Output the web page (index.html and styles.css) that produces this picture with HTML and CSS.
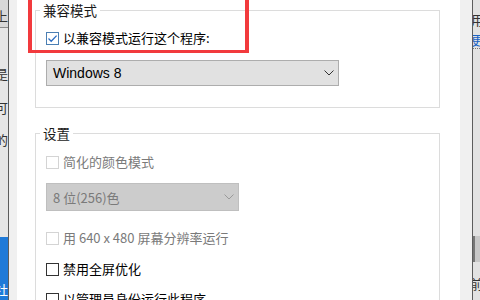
FILE: index.html
```html
<!DOCTYPE html>
<html>
<head>
    <title>兼容性</title>
    <link rel="stylesheet" href="styles.css">
</head>
<body>
    <div class="screen">
        <div class="behind behind-left">
            <div class="toolbar"><span class="frag">上</span></div>
            <span class="frag frag-a">是</span>
            <span class="frag frag-b">可</span>
            <span class="frag frag-c">的</span>
            <div class="spacer"></div>
            <div class="selected"><span class="frag frag-d">社</span></div>
        </div>
        <div class="edge"></div>
        <div class="frame"></div>

        <div class="page">
            <fieldset class="group group-compat">
                <legend>兼容模式</legend>
                <label class="check-row row-first">
                    <span class="box checked">
                        <svg width="11" height="11" viewBox="0 0 11 11"><path d="M1.5 5.5 L4.2 8.2 L9.6 2.6" fill="none" stroke="#2a6cc2" stroke-width="1.3"/></svg>
                    </span>
                    以兼容模式运行这个程序:
                </label>
                <div class="combo combo-os">
                    <span class="combo-text">Windows 8</span>
                    <svg class="chevron" width="10" height="6" viewBox="0 0 10 6"><polyline points="0.5,0.5 5,5 9.5,0.5" fill="none" stroke="#333" stroke-width="1"/></svg>
                </div>
            </fieldset>

            <fieldset class="group group-settings">
                <legend>设置</legend>
                <label class="check-row disabled row-color">
                    <span class="box"></span>
                    简化的颜色模式
                </label>
                <div class="combo combo-color disabled">
                    <span class="combo-text cjk">8 位(256)色</span>
                    <svg class="chevron" width="10" height="6" viewBox="0 0 10 6"><polyline points="0.5,0.5 5,5 9.5,0.5" fill="none" stroke="#9a9a9a" stroke-width="1"/></svg>
                </div>
                <label class="check-row disabled row-res">
                    <span class="box"></span>
                    用 640 x 480 屏幕分辨率运行
                </label>
                <label class="check-row row-full">
                    <span class="box"></span>
                    禁用全屏优化
                </label>
                <label class="check-row row-admin">
                    <span class="box"></span>
                    以管理员身份运行此程序
                </label>
            </fieldset>

            <div class="highlight"></div>
        </div>

        <div class="frame frame-right"></div>
        <div class="edge"></div>
        <div class="behind behind-right">
            <span class="frag frag-e">用</span>
            <span class="frag frag-link">更</span>
            <div class="spacer"></div>
            <div class="thumb"></div>
            <span class="frag frag-f">前</span>
        </div>
    </div>
</body>
</html>
```

FILE: styles.css
```css
body {
    margin: 0;
    font-family: "Noto Sans CJK SC", "Liberation Sans", sans-serif;
    font-size: 13px;
    color: #000;
    background: #f0f0f0;
}

.screen {
    display: flex;
    width: 480px;
    height: 300px;
    overflow: hidden;
}

/* windows peeking out behind the dialog */
.behind {
    display: flex;
    flex-direction: column;
    background: #e6e6e6;
    overflow: hidden;
    font-size: 13px;
    line-height: 16px;
    color: #333;
}

.behind-left {
    width: 8px;
    align-items: flex-end;
}

.behind-right {
    width: 7px;
    align-items: flex-start;
    background: #e2e2e2;
}

.frag {
    white-space: nowrap;
    flex-shrink: 0;
}

.toolbar {
    display: flex;
    justify-content: flex-end;
    align-items: flex-end;
    width: 8px;
    height: 28px;
    padding-bottom: 3px;
    box-sizing: border-box;
    background: #d8d8d8;
    border-bottom: 1px solid #8a8a8a;
}

.frag-a { margin-top: 38px; }
.frag-b { margin-top: 18px; }
.frag-c { margin-top: 16px; }

.spacer { flex: 1; }

.selected {
    display: flex;
    justify-content: flex-end;
    align-items: flex-end;
    width: 8px;
    height: 63px;
    background: #1f7ad8;
    color: #fff;
}

.frag-d { margin-bottom: 2px; }

.frag-e { margin-top: 12px; margin-left: -2px; }

.frag-link {
    margin-top: 4px;
    margin-left: -2px;
    color: #1a63c4;
    border-bottom: 1px dotted #777;
}

.thumb {
    width: 7px;
    height: 26px;
    margin-bottom: 14px;
    background: #c8c8c8;
    border-left: 2px solid #777;
    box-sizing: border-box;
}

.frag-f { margin-bottom: 8px; margin-left: -3px; }

.edge {
    width: 1px;
    background: #5c5c5c;
}

.frame {
    width: 8px;
    background: #f0f0f0;
}

.frame-right {
    width: 12px;
}

/* the tab page */
.page {
    position: relative;
    width: 443px;
    padding: 2px 20px 0 18px;
    box-sizing: border-box;
    background: #fff;
}

.group {
    margin: 0;
    padding: 0 0 0 10px;
    border: 1px solid #dcdcdc;
    display: flex;
    flex-direction: column;
    align-items: flex-start;
}

.group legend {
    padding: 0 3px;
    margin-left: -6px;
    line-height: 16px;
    font-size: 13.5px;
    color: #1a1a1a;
}

.group-compat {
    padding-bottom: 21px;
}

.group-settings {
    margin-top: 17px;
    border-bottom: none;
    height: 200px;
}

.check-row {
    display: flex;
    align-items: center;
    gap: 4px;
    height: 16px;
    line-height: 16px;
    white-space: nowrap;
}

.box {
    display: flex;
    align-items: center;
    justify-content: center;
    width: 13px;
    height: 13px;
    box-sizing: border-box;
    border: 1px solid #333;
    background: #fff;
}

.box.checked {
    border-color: #4b7fb3;
}

.check-row.disabled {
    color: #7a7a7a;
}

.check-row.disabled .box {
    border-color: #d4d4d4;
}

.row-first { margin-top: 12px; }
.row-color { margin-top: 13px; }
.row-res { margin-top: 19px; }
.row-full { margin-top: 15px; }
.row-admin { margin-top: 14px; }

.combo {
    display: flex;
    align-items: center;
    justify-content: space-between;
    box-sizing: border-box;
    padding: 0 4px 0 6px;
    border: 1px solid #adadad;
    background: #e1e1e1;
}

.combo-os {
    width: 293px;
    height: 26px;
    margin-top: 14px;
    font-family: "Liberation Sans", sans-serif;
    font-size: 14px;
}

.combo-color {
    width: 193px;
    height: 28px;
    margin-top: 13px;
}

.combo.disabled {
    background: #cccccc;
    border-color: #bfbfbf;
    color: #7a7a7a;
}

.combo-text.cjk {
    font-family: "Noto Sans CJK SC", sans-serif;
    font-size: 13px;
}

/* red annotation box */
.highlight {
    position: absolute;
    left: 11px;
    top: -10px;
    width: 221px;
    height: 63px;
    box-sizing: border-box;
    border: 4px solid #f23a3d;
    border-top-width: 0;
    border-bottom-width: 3px;
}
```
